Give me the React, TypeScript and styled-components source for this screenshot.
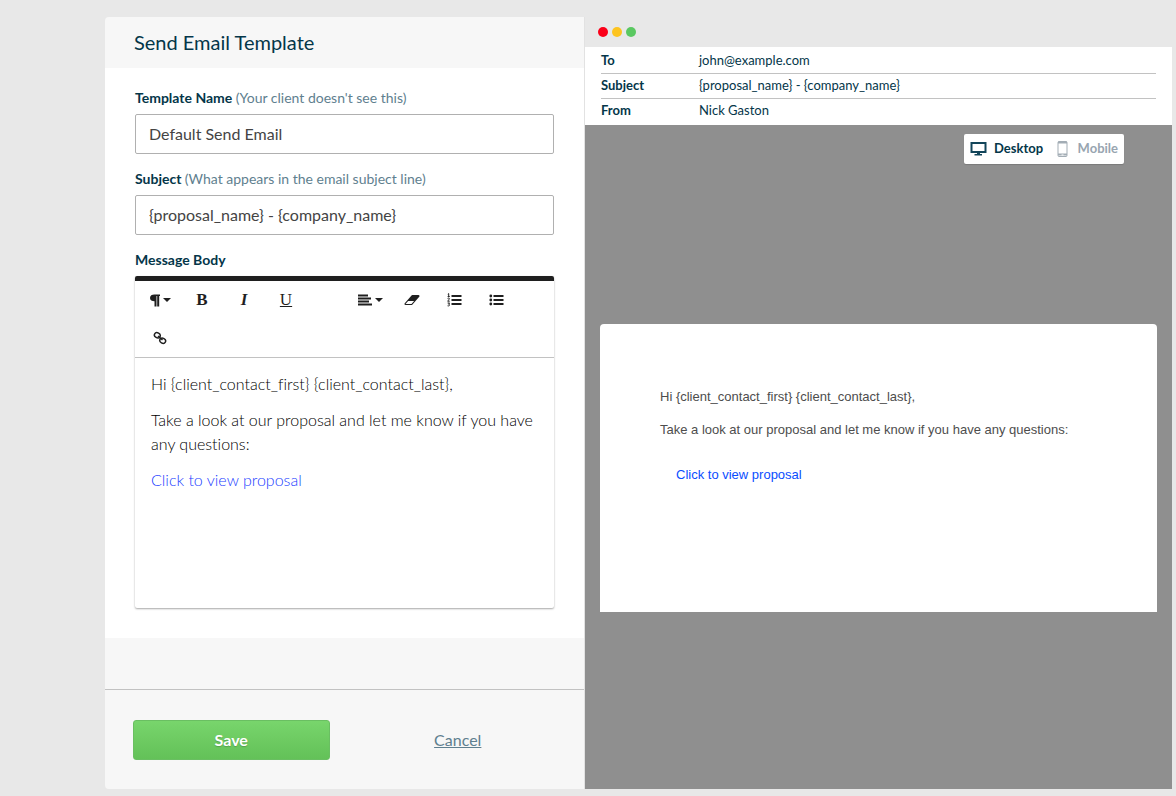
import React, { useState } from 'react';
import styled, { createGlobalStyle } from 'styled-components';

const navy = '#043649';
const muted = '#5f7f8f';
const sans = "Lato, 'Open Sans', sans-serif";

const GlobalStyle = createGlobalStyle`
  *, *::before, *::after { box-sizing: border-box; }
  body {
    margin: 0;
    background: #e8e8e8;
    font-family: ${sans};
    font-variant-ligatures: none;
    color: ${navy};
  }
  button, input { font-family: inherit; }
`;

const Page = styled.div`
  min-height: 100vh;
  padding: 17px 4px 7px 105px;
  display: grid;
  grid-template-columns: 480px minmax(0, 1fr);
`;

const FormPanel = styled.form`
  display: flex;
  flex-direction: column;
  background: #f7f7f7;
  border-right: 1px solid #e2e2e2;
  border-radius: 4px 0 0 4px;
  overflow: hidden;
`;

const FormHeader = styled.header`
  padding: 11px 29px 12px;
`;

const Title = styled.h1`
  margin: 0;
  font-size: 20px;
  line-height: 28px;
  font-weight: 400;
`;

const Fields = styled.div`
  background: #fff;
  padding: 20px 30px 30px;
  display: flex;
  flex-direction: column;
  gap: 15px;
`;

const Field = styled.div`
  display: flex;
  flex-direction: column;
  gap: 6px;
`;

const Label = styled.label`
  font-size: 14px;
  line-height: 20px;
  font-weight: 700;
`;

const Hint = styled.span`
  font-weight: 400;
  color: ${muted};
`;

const TextInput = styled.input`
  width: 100%;
  height: 40px;
  padding: 0 13px 2px;
  border: 1px solid #b0b0b0;
  border-radius: 2px;
  background: #fff;
  color: #444;
  font-size: 16px;
`;

const Editor = styled.div`
  border-top: 5px solid #1f1f1f;
  border-radius: 2px;
  box-shadow: 0 1px 2px rgba(0, 0, 0, 0.35);
`;

const Toolbar = styled.div`
  display: flex;
  flex-wrap: wrap;
  padding: 0 4px;
  border-bottom: 1px solid #c2c2c2;
`;

const ToolButton = styled.button`
  width: 42px;
  height: 38px;
  padding: 0;
  border: 0;
  background: none;
  color: #1f1f1f;
  display: flex;
  align-items: center;
  justify-content: center;
  gap: 3px;
`;

const ToolGap = styled.span`
  width: 42px;
`;

const Letter = styled.span<{ $kind: 'bold' | 'italic' | 'underline' }>`
  font-family: 'Liberation Serif', serif;
  font-size: 17px;
  line-height: 18px;
  font-weight: ${(p) => (p.$kind === 'underline' ? 400 : 700)};
  font-style: ${(p) => (p.$kind === 'italic' ? 'italic' : 'normal')};
  text-decoration: ${(p) => (p.$kind === 'underline' ? 'underline' : 'none')};
`;

const MessageArea = styled.div`
  min-height: 250px;
  padding: 14px 16px;
  display: flex;
  flex-direction: column;
  gap: 12px;
  color: #000;
  font-size: 16px;
  line-height: 24px;
  font-weight: 300;
  outline: none;
`;

const Para = styled.p`
  margin: 0;
`;

const Link = styled.a`
  color: #1a40ff;
  text-decoration: none;
`;

const Strip = styled.div`
  height: 52px;
  border-bottom: 1px solid #c2c2c2;
`;

const Actions = styled.div`
  display: grid;
  grid-template-columns: 1fr 1fr;
  gap: 30px;
  padding: 30px 28px 29px;
  align-items: center;
  justify-items: center;
`;

const SaveButton = styled.button`
  width: 100%;
  height: 40px;
  padding: 0 0 2px;
  border: 1px solid #6abf62;
  border-radius: 3px;
  background: linear-gradient(#78d56c, #63c158);
  color: #fff;
  font-size: 16px;
  font-weight: 700;
  text-shadow: 0 1px 1px rgba(0, 0, 0, 0.2);
`;

const CancelLink = styled.a`
  color: ${muted};
  font-size: 16px;
  line-height: 20px;
`;

const Preview = styled.section`
  display: flex;
  flex-direction: column;
  background: #8f8f8f;
`;

const WindowBar = styled.div`
  height: 30px;
  padding: 0 13px;
  display: flex;
  align-items: center;
  gap: 4px;
  background: #e8e8e8;
`;

const Dot = styled.span<{ $color: string }>`
  width: 10px;
  height: 10px;
  border-radius: 50%;
  background: ${(p) => p.$color};
`;

const MetaBox = styled.div`
  padding: 2px 16px 1px;
  background: #fff;
`;

const Meta = styled.table`
  width: 100%;
  border-collapse: separate;
  border-spacing: 0;
  font-size: 13px;
  line-height: 22px;
  th, td { height: 25px; padding: 0; vertical-align: top; }
  tr:not(:last-child) > * { border-bottom: 1px solid #c2c2c2; }
`;

const MetaName = styled.th`
  width: 98px;
  text-align: left;
  font-weight: 700;
`;

const MetaValue = styled.td`
  font-weight: 400;
`;

const Stage = styled.div`
  padding: 9px 15px;
  display: flex;
  flex-direction: column;
  gap: 160px;
`;

const Devices = styled.div`
  align-self: flex-end;
  margin-right: 33px;
  height: 30px;
  padding: 0 6px;
  display: flex;
  justify-content: space-between;
  width: 160px;
  background: #fff;
  border-radius: 2px;
  box-shadow: 0 1px 1px rgba(0, 0, 0, 0.15);
`;

const DeviceButton = styled.button<{ $active: boolean }>`
  padding: 0 0 2px;
  border: 0;
  background: none;
  display: flex;
  align-items: center;
  gap: 7px;
  font-size: 13px;
  font-weight: 700;
  color: ${(p) => (p.$active ? navy : '#98a5b0')};
  svg { margin-top: 2px; }
`;

const Mail = styled.article`
  min-height: 288px;
  padding: 64px 60px;
  background: #fff;
  border-radius: 4px 4px 0 0;
  color: #4d4d4d;
  font-family: 'Liberation Sans', Arial, sans-serif;
  font-size: 13px;
  line-height: 18px;
`;

const MailPara = styled.p`
  margin: 0 0 15px;
`;

const MailLink = styled.a`
  display: inline-block;
  padding: 12px 16px;
  color: #0a4dff;
  text-decoration: none;
`;

const Caret = () => (
  <svg width="8" height="4" viewBox="0 0 8 4" aria-hidden="true">
    <path d="M0 0h8L4 4z" fill="currentColor" />
  </svg>
);

const ParagraphIcon = () => (
  <svg width="10" height="13" viewBox="0 0 10 13" aria-hidden="true">
    <path
      d="M10 0.500v1.500H9.200v10.500H7.200V2H6.500v10.500H4.500V7.200C2 7.200 0 6 0 3.900 0 1.700 1.900.5 4.400.5z"
      fill="currentColor"
    />
  </svg>
);

const AlignIcon = () => (
  <svg width="14" height="12" viewBox="0 0 14 12" aria-hidden="true">
    <path d="M0 0.500h10v2H0zM0 3.500h13v2H0zM0 6.500h11v2H0zM0 9.500h14v2H0z" fill="currentColor" />
  </svg>
);

const EraserIcon = () => (
  <svg width="16" height="14" viewBox="0 0 2048 1792" aria-hidden="true">
    <path
      d="M960 1408l336-384h-768l-336 384h768zm1013-1077q15 34 9.500 71.500t-30.500 65.500l-896 1024q-38 44-96 44h-768q-38 0-69.500-20.500t-47.500-54.500q-15-34-9.500-71.500t30.500-65.500l896-1024q38-44 96-44h768q38 0 69.500 20.500t47.500 54.500z"
      fill="currentColor"
    />
  </svg>
);

const OrderedIcon = () => (
  <svg width="15" height="14" viewBox="0 0 15 14" aria-hidden="true">
    <path d="M4.500 2h10v2h-10zM4.500 6h10v2h-10zM4.500 10h10v2h-10z" fill="currentColor" />
    <path
      d="M.8 1.200L1.700.6V3.600M.6 3.600h2.200M.6 5.500C1.200 4.900 2.600 5 2.400 6 2.200 6.900.7 7.300.7 8.200h2M.6 10h2L1.600 11.200c1.500 0 1.400 2.200-1 1.600"
      fill="none"
      stroke="currentColor"
      strokeWidth="1"
    />
  </svg>
);

const BulletIcon = () => (
  <svg width="15" height="12" viewBox="0 0 15 12" aria-hidden="true">
    <path d="M4.500 1h10v2h-10zM4.500 5h10v2h-10zM4.500 9h10v2h-10z" fill="currentColor" />
    <g fill="currentColor">
      <circle cx="1.800" cy="2" r="1.400" />
      <circle cx="1.800" cy="6" r="1.400" />
      <circle cx="1.800" cy="10" r="1.400" />
    </g>
  </svg>
);

const ChainIcon = () => (
  <svg width="14" height="14" viewBox="0 0 14 14" aria-hidden="true">
    <g fill="none" stroke="currentColor" strokeWidth="1.500">
      <ellipse cx="4.300" cy="4.300" rx="3" ry="2.500" transform="rotate(30 4.300 4.300)" />
      <ellipse cx="9.700" cy="9.700" rx="3" ry="2.500" transform="rotate(30 9.700 9.700)" />
      <path d="M5 5l4.500 4" />
    </g>
  </svg>
);

const DesktopIcon = () => (
  <svg width="17" height="14" viewBox="0 0 17 14" aria-hidden="true">
    <path d="M1.500 1h14v9h-14z" fill="none" stroke="#12455a" strokeWidth="2" />
    <path d="M7 10.500h3V12h2v1.500H4.500V12H7z" fill="#12455a" />
  </svg>
);

const MobileIcon = () => (
  <svg width="14" height="16" viewBox="0 0 14 16" aria-hidden="true">
    <path d="M1 1.500h9M1 13.500h9" fill="none" stroke="#a3adb5" strokeWidth="2" />
    <rect x="1" y="0.500" width="9" height="15" rx="1" fill="none" stroke="#a3adb5" />
    <path d="M4.500 13.500h2v1h-2z" fill="#fff" />
  </svg>
);

const metaRows = [
  ['To', 'john@example.com'],
  ['Subject', '{proposal_name} - {company_name}'],
  ['From', 'Nick Gaston'],
];

export default function App() {
  const [device, setDevice] = useState('desktop');
  return (
    <>
      <GlobalStyle />
      <Page>
        <FormPanel onSubmit={(e) => e.preventDefault()}>
          <FormHeader>
            <Title>Send Email Template</Title>
          </FormHeader>
          <Fields>
            <Field>
              <Label htmlFor="name">
                Template Name <Hint>(Your client doesn't see this)</Hint>
              </Label>
              <TextInput id="name" defaultValue="Default Send Email" />
            </Field>
            <Field>
              <Label htmlFor="subject">
                Subject <Hint>(What appears in the email subject line)</Hint>
              </Label>
              <TextInput id="subject" defaultValue="{proposal_name} - {company_name}" />
            </Field>
            <Field>
              <Label as="span" id="body-label">
                Message Body
              </Label>
              <Editor>
                <Toolbar role="toolbar" aria-label="Formatting">
                  <ToolButton type="button" aria-label="Paragraph format">
                    <ParagraphIcon />
                    <Caret />
                  </ToolButton>
                  <ToolButton type="button" aria-label="Bold">
                    <Letter $kind="bold">B</Letter>
                  </ToolButton>
                  <ToolButton type="button" aria-label="Italic">
                    <Letter $kind="italic">I</Letter>
                  </ToolButton>
                  <ToolButton type="button" aria-label="Underline">
                    <Letter $kind="underline">U</Letter>
                  </ToolButton>
                  <ToolGap />
                  <ToolButton type="button" aria-label="Align">
                    <AlignIcon />
                    <Caret />
                  </ToolButton>
                  <ToolButton type="button" aria-label="Clear formatting">
                    <EraserIcon />
                  </ToolButton>
                  <ToolButton type="button" aria-label="Ordered list">
                    <OrderedIcon />
                  </ToolButton>
                  <ToolButton type="button" aria-label="Unordered list">
                    <BulletIcon />
                  </ToolButton>
                  <ToolButton type="button" aria-label="Insert link">
                    <ChainIcon />
                  </ToolButton>
                </Toolbar>
                <MessageArea
                  role="textbox"
                  aria-multiline="true"
                  aria-labelledby="body-label"
                  contentEditable
                  suppressContentEditableWarning
                  spellCheck={false}
                >
                  <Para>{'Hi {client_contact_first} {client_contact_last},'}</Para>
                  <Para>
                    Take a look at our proposal and let me know if you have any questions:
                  </Para>
                  <Para>
                    <Link href="#proposal">Click to view proposal</Link>
                  </Para>
                </MessageArea>
              </Editor>
            </Field>
          </Fields>
          <Strip />
          <Actions>
            <SaveButton type="submit">Save</SaveButton>
            <CancelLink href="#cancel">Cancel</CancelLink>
          </Actions>
        </FormPanel>
        <Preview aria-label="Email preview">
          <WindowBar>
            <Dot $color="#fb0019" />
            <Dot $color="#fdc41f" />
            <Dot $color="#5ac861" />
          </WindowBar>
          <MetaBox>
            <Meta>
              <tbody>
                {metaRows.map(([name, value]) => (
                  <tr key={name}>
                    <MetaName scope="row">{name}</MetaName>
                    <MetaValue>{value}</MetaValue>
                  </tr>
                ))}
              </tbody>
            </Meta>
          </MetaBox>
          <Stage>
            <Devices>
              <DeviceButton
                type="button"
                $active={device === 'desktop'}
                aria-pressed={device === 'desktop'}
                onClick={() => setDevice('desktop')}
              >
                <DesktopIcon />
                Desktop
              </DeviceButton>
              <DeviceButton
                type="button"
                $active={device === 'mobile'}
                aria-pressed={device === 'mobile'}
                onClick={() => setDevice('mobile')}
              >
                <MobileIcon />
                Mobile
              </DeviceButton>
            </Devices>
            <Mail>
              <MailPara>{'Hi {client_contact_first} {client_contact_last},'}</MailPara>
              <MailPara>
                Take a look at our proposal and let me know if you have any questions:
              </MailPara>
              <MailLink href="#proposal">Click to view proposal</MailLink>
            </Mail>
          </Stage>
        </Preview>
      </Page>
    </>
  );
}
